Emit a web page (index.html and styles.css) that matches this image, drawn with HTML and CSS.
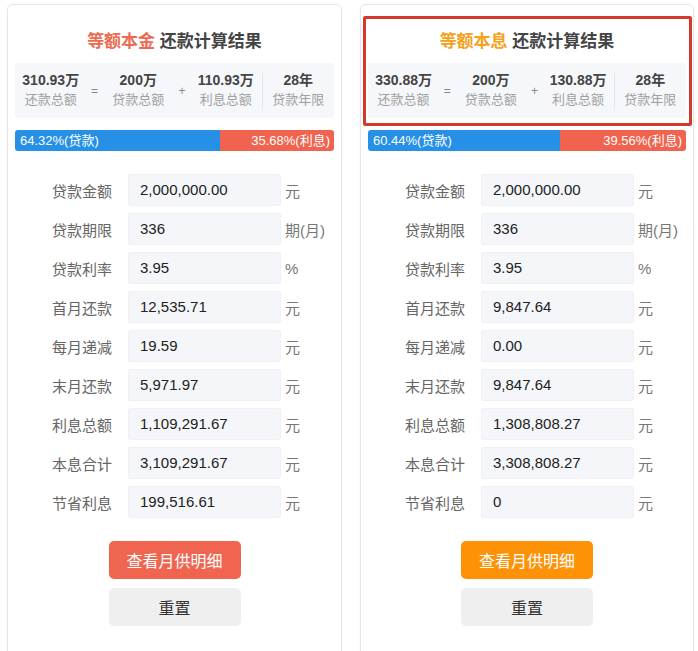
FILE: index.html
```html
<!DOCTYPE html>
<html>
	<head>
		<meta charset="utf-8">
		<title>还款计算结果</title>
		<link rel="stylesheet" href="styles.css">
	</head>
	<body>
		<div class="cards">
			<div class="card">
				<h2 class="titulo"><span class="tipo rojo">等额本金</span> 还款计算结果</h2>
				<div class="resumen">
					<div class="dato"><b>310.93万</b><span>还款总额</span></div>
					<div class="op">=</div>
					<div class="dato"><b>200万</b><span>贷款总额</span></div>
					<div class="op">+</div>
					<div class="dato"><b>110.93万</b><span>利息总额</span></div>
					<div class="sep"></div>
					<div class="dato"><b>28年</b><span>贷款年限</span></div>
				</div>
				<div class="barra">
					<div class="prestamo" style="width:64.32%">64.32%(贷款)</div>
					<div class="interes">35.68%(利息)</div>
				</div>
				<div class="tabla">
					<label>贷款金额</label><div class="caja">2,000,000.00</div><span class="unidad">元</span>
					<label>贷款期限</label><div class="caja">336</div><span class="unidad">期(月)</span>
					<label>贷款利率</label><div class="caja">3.95</div><span class="unidad">%</span>
					<label>首月还款</label><div class="caja">12,535.71</div><span class="unidad">元</span>
					<label>每月递减</label><div class="caja">19.59</div><span class="unidad">元</span>
					<label>末月还款</label><div class="caja">5,971.97</div><span class="unidad">元</span>
					<label>利息总额</label><div class="caja">1,109,291.67</div><span class="unidad">元</span>
					<label>本息合计</label><div class="caja">3,109,291.67</div><span class="unidad">元</span>
					<label>节省利息</label><div class="caja">199,516.61</div><span class="unidad">元</span>
				</div>
				<div class="botones">
					<button class="ver rojo-bg">查看月供明细</button>
					<button class="reset">重置</button>
				</div>
			</div>

			<div class="card">
				<div class="marca"></div>
				<h2 class="titulo"><span class="tipo naranja">等额本息</span> 还款计算结果</h2>
				<div class="resumen">
					<div class="dato"><b>330.88万</b><span>还款总额</span></div>
					<div class="op">=</div>
					<div class="dato"><b>200万</b><span>贷款总额</span></div>
					<div class="op">+</div>
					<div class="dato"><b>130.88万</b><span>利息总额</span></div>
					<div class="sep"></div>
					<div class="dato"><b>28年</b><span>贷款年限</span></div>
				</div>
				<div class="barra">
					<div class="prestamo" style="width:60.44%">60.44%(贷款)</div>
					<div class="interes">39.56%(利息)</div>
				</div>
				<div class="tabla">
					<label>贷款金额</label><div class="caja">2,000,000.00</div><span class="unidad">元</span>
					<label>贷款期限</label><div class="caja">336</div><span class="unidad">期(月)</span>
					<label>贷款利率</label><div class="caja">3.95</div><span class="unidad">%</span>
					<label>首月还款</label><div class="caja">9,847.64</div><span class="unidad">元</span>
					<label>每月递减</label><div class="caja">0.00</div><span class="unidad">元</span>
					<label>末月还款</label><div class="caja">9,847.64</div><span class="unidad">元</span>
					<label>利息总额</label><div class="caja">1,308,808.27</div><span class="unidad">元</span>
					<label>本息合计</label><div class="caja">3,308,808.27</div><span class="unidad">元</span>
					<label>节省利息</label><div class="caja">0</div><span class="unidad">元</span>
				</div>
				<div class="botones">
					<button class="ver naranja-bg">查看月供明细</button>
					<button class="reset">重置</button>
				</div>
			</div>
		</div>
	</body>
</html>
```

FILE: styles.css
```css
html, body{
	margin: 0px;
	padding: 0px;
	background-color: #fff;
	overflow: hidden;
}

body{
	font-family: "Liberation Sans", "Noto Sans CJK SC", sans-serif;
	color: #333;
	padding-top: 4px;
	padding-left: 7px;
}

.cards{
	display: flex;
	gap: 18px;
}

.card{
	position: relative;
	width: 335px;
	box-sizing: border-box;
	height: 700px;
	border: 1px solid #e6e6e6;
	border-radius: 6px;
	padding: 0 7px;
	box-shadow: 0 0 3px rgba(0,0,0,0.04);
}

.card + .card{
	width: 334px;
}

.titulo{
	margin: 0;
	padding-top: 25px;
	height: 33px;
	line-height: 24px;
	text-align: center;
	font-size: 17px;
	font-weight: bold;
	color: #444;
}

.rojo{ color: #ec6a50; }
.naranja{ color: #f5a11c; }

.resumen{
	display: flex;
	align-items: center;
	height: 55px;
	background-color: #f5f7fa;
	border-radius: 3px;
}

.dato{
	flex: 1;
	text-align: center;
	display: flex;
	flex-direction: column;
}

.dato b{
	font-size: 14px;
	color: #444;
	line-height: 18px;
}

.dato span{
	font-size: 13px;
	color: #a0a0a0;
	line-height: 20px;
	margin-top: 1px;
}

.op{
	width: 16px;
	text-align: center;
	font-size: 12px;
	color: #888;
}

.sep{
	width: 1px;
	height: 36px;
	background-color: #e3e6ea;
}

.barra{
	display: flex;
	margin-top: 12px;
	height: 21px;
	border-radius: 3px;
	overflow: hidden;
	font-size: 13px;
	line-height: 21px;
	color: #fff;
}

.prestamo{
	background-color: #2590e6;
	padding-left: 5px;
	box-sizing: border-box;
}

.interes{
	flex: 1;
	background-color: #f0634f;
	text-align: right;
	padding-right: 4px;
}

.tabla{
	display: grid;
	grid-template-columns: 76px 153px auto;
	row-gap: 7px;
	margin-top: 23px;
	margin-left: 37px;
	align-items: center;
}

.tabla label{
	font-size: 15px;
	color: #666;
}

.caja{
	height: 32px;
	line-height: 32px;
	background-color: #f4f6f9;
	border-radius: 3px;
	padding-left: 12px;
	font-size: 15px;
	color: #222;
	box-shadow: inset 0 0 0 1px #eef0f3;
}

.unidad{
	padding-left: 4px;
	font-size: 15px;
	color: #777;
}

.botones{
	display: flex;
	flex-direction: column;
	align-items: center;
	gap: 9px;
	margin-top: 23px;
}

button{
	width: 132px;
	height: 38px;
	border: none;
	border-radius: 5px;
	font-family: "Liberation Sans", "Noto Sans CJK SC", sans-serif;
	font-size: 16px;
}

.ver{ color: #fff; }
.rojo-bg{ background-color: #ef6550; }
.naranja-bg{ background-color: #fd9207; }

.reset{
	background-color: #efefef;
	color: #333;
}

.marca{
	position: absolute;
	left: 2px;
	top: 11px;
	width: 329px;
	height: 110px;
	box-sizing: border-box;
	border: 3px solid #d23a2e;
	border-radius: 2px;
}
```
